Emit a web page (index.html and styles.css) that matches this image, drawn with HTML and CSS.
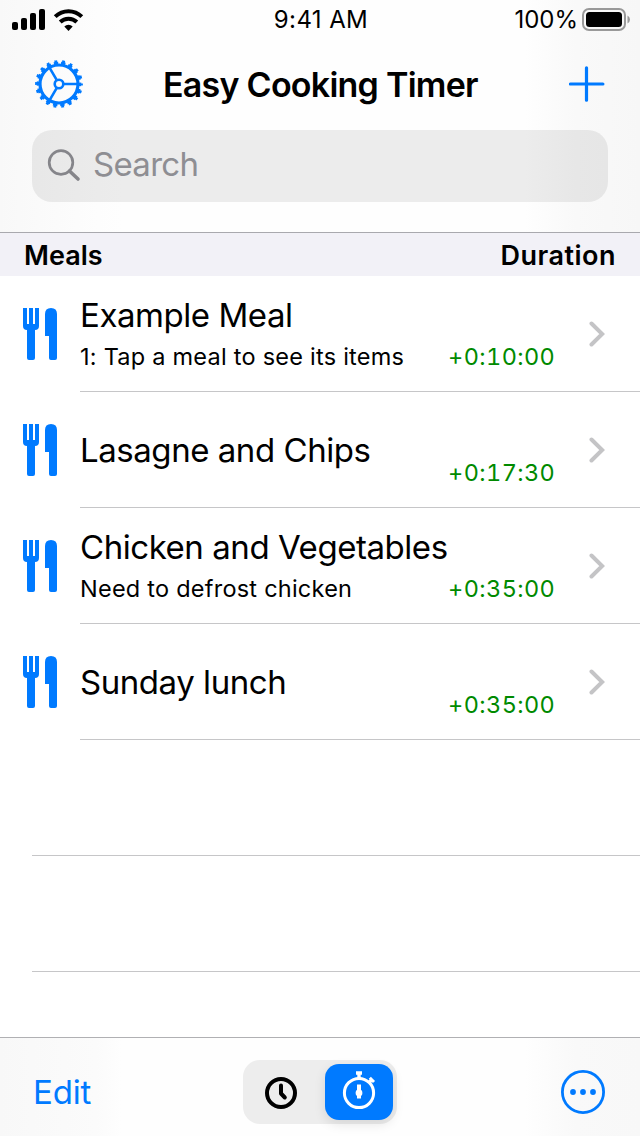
FILE: index.html
```html
<!DOCTYPE html>
<html lang="en">
<head>
	<meta charset="UTF-8">
	<title>Easy Cooking Timer</title>
	<link rel="stylesheet" href="styles.css">
</head>
<body>
<!-- shared icons -->
<svg class="defs" width="0" height="0">
	<symbol id="cutlery" viewBox="0 0 34 52">
		<path d="M0 0h4v16h2V0h4v16h2V0h4v18q0 4-4 4v28q0 2-2 2H6q-2 0-2-2V22q-4 0-4-4z"/>
		<path d="M22 28V6q0-6 6-6t6 6v44q0 2-2 2h-4q-2 0-2-2V28z"/>
	</symbol>
	<symbol id="chevron" viewBox="0 0 16 26">
		<path d="M2.5 2.5L13.2 13 2.5 23.5" fill="none" stroke="#c4c4c6" stroke-width="4" stroke-linecap="round"/>
	</symbol>
</svg>
<section class="container">
	<header class="top">
		<div class="status">
			<div class="signal">
				<svg width="72" height="22" viewBox="0 0 72 22">
					<rect x="0" y="13" width="6" height="8" rx="2"/>
					<rect x="9" y="9" width="6" height="12" rx="2"/>
					<rect x="18" y="4" width="6" height="17" rx="2"/>
					<rect x="27" y="0" width="6" height="21" rx="2"/>
					<g fill="none" stroke="#000" stroke-width="4">
						<path d="M43.2 7.6a19 19 0 0 1 26.6 0"/>
						<path d="M48.2 13a12 12 0 0 1 16.6 0"/>
					</g>
					<path d="M52.3 17.5a6.2 6.2 0 0 1 8.4 0L56.5 22z"/>
				</svg>
			</div>
			<span class="time">9:41 AM</span>
			<div class="battery">
				<span>100%</span>
				<svg width="48" height="24" viewBox="0 0 48 24">
					<rect x="1" y="1" width="42" height="21" rx="6" fill="none" stroke="#999" stroke-width="2"/>
					<rect x="4" y="4" width="36" height="15" rx="3.5"/>
					<path d="M45.5 7.5q2.500 1.500 2.500 4t-2.500 4z" fill="#999"/>
				</svg>
			</div>
		</div>
		<div class="nav">
			<svg class="gear" width="48" height="48" viewBox="-24 -24 48 48">
				<g fill="none" stroke="#007aff">
					<circle r="19" stroke-width="3.2"/>
					<circle r="21" stroke-width="2.6" stroke-dasharray="4.4 2.930" stroke-dashoffset="2.2"/>
					<circle r="22.500" stroke-width="2.800" stroke-dasharray="2.8 5.054" stroke-dashoffset="1.4"/>
					<circle r="4.300" stroke-width="2.600"/>
					<path d="M5 0h14M-2.500-4.330L-9.500-16.450M-2.500 4.330L-9.500 16.450" stroke-width="2.600"/>
				</g>
			</svg>
			<h1>Easy Cooking Timer</h1>
			<svg class="plus" width="36" height="36" viewBox="0 0 36 36">
				<path d="M1.500 18h32.400M17.500 1.800v32.400" stroke="#007aff" stroke-width="3.200" stroke-linecap="round"/>
			</svg>
		</div>
		<div class="search">
			<svg width="34" height="34" viewBox="0 0 34 34">
				<g fill="none" stroke="#85858a" stroke-linecap="round">
					<circle cx="14" cy="13.500" r="11.800" stroke-width="2.700"/>
					<path d="M22.500 22l8.500 8" stroke-width="3.600"/>
				</g>
			</svg>
			<span>Search</span>
		</div>
	</header>
	<div class="title">
		<span class="meals">Meals</span>
		<span class="duration">Duration</span>
	</div>
	<ul class="list">
		<li>
			<svg class="icon"><use href="#cutlery"/></svg>
			<div class="row">
				<div class="info">
					<h2>Example Meal</h2>
					<p>1: Tap a meal to see its items</p>
				</div>
				<span class="len">+0:10:00</span>
				<svg class="arrow"><use href="#chevron"/></svg>
			</div>
		</li>
		<li>
			<svg class="icon"><use href="#cutlery"/></svg>
			<div class="row">
				<div class="info">
					<h2>Lasagne and Chips</h2>
				</div>
				<span class="len">+0:17:30</span>
				<svg class="arrow"><use href="#chevron"/></svg>
			</div>
		</li>
		<li>
			<svg class="icon"><use href="#cutlery"/></svg>
			<div class="row">
				<div class="info">
					<h2>Chicken and Vegetables</h2>
					<p>Need to defrost chicken</p>
				</div>
				<span class="len">+0:35:00</span>
				<svg class="arrow"><use href="#chevron"/></svg>
			</div>
		</li>
		<li>
			<svg class="icon"><use href="#cutlery"/></svg>
			<div class="row">
				<div class="info">
					<h2>Sunday lunch</h2>
				</div>
				<span class="len">+0:35:00</span>
				<svg class="arrow"><use href="#chevron"/></svg>
			</div>
		</li>
		<li class="empty"></li>
		<li class="empty"></li>
	</ul>
	<footer class="bottom">
		<a href="javascript:;" class="edit">Edit</a>
		<div class="switch">
			<a href="javascript:;">
				<svg width="32" height="34" viewBox="0 0 32 34">
					<g fill="none" stroke="#000" stroke-width="4" stroke-linecap="round" stroke-linejoin="round">
						<circle cx="16" cy="18" r="14"/>
						<path d="M16 10.500v8l3.800 4"/>
					</g>
				</svg>
			</a>
			<a href="javascript:;" class="on">
				<svg width="34" height="42" viewBox="0 0 34 42">
					<g fill="none" stroke="#fff" stroke-width="3">
						<circle cx="17" cy="22" r="14.600"/>
						<path d="M14 2h6M17 2v6M26.500 12l3-3" stroke-width="3.400"/>
						<path d="M27.800 6.800l4.200 4.200"/>
						<path d="M17 13.500v14" stroke-width="4"/>
					</g>
					<circle cx="17" cy="22" r="3.400" fill="#fff"/>
				</svg>
			</a>
		</div>
		<svg class="more" width="44" height="44" viewBox="0 0 44 44">
			<circle cx="22" cy="22" r="20.600" fill="none" stroke="#007aff" stroke-width="2.800"/>
			<g fill="#007aff">
				<circle cx="12" cy="22" r="2.900"/>
				<circle cx="22" cy="22" r="2.900"/>
				<circle cx="32" cy="22" r="2.900"/>
			</g>
		</svg>
	</footer>
</section>
</body>
</html>
```
FILE: styles.css
```css
body, h1, h2, p, ul, li
{
	margin: 0;
	padding: 0;
}
body{
	background: #fff;
	color: #000;
	font-family: Inter, "Liberation Sans", sans-serif;
}
h1, h2 { font-weight: 400; }
ul { list-style: none; }
a { text-decoration: none; color: #007aff; }
svg { display: block; flex-shrink: 0; }
span, h1, h2, p, a { white-space: nowrap; }
.defs{
	position: absolute;
}

.container{
	width: 640px;
	height: 1136px;
	overflow: hidden;
	display: flex;
	flex-direction: column;
}
/* top bar */
.top{
	box-sizing: border-box;
	height: 233px;
	border-bottom: 1px solid #a9a9ae;
	background: linear-gradient(90deg, #f8f8f8, #fcfcfc 12%, #fefefe 19%, #fefefe 82%, #f9f9f9 90%, #f7f7f7);
}
.status{
	display: grid;
	grid-template-columns: 1fr auto 1fr;
	align-items: center;
	height: 40px;
	padding: 0 10px 0 12px;
	font-size: 24px;
}
.time{
	letter-spacing: 0.4px;
	line-height: 28px;
}
.battery{
	display: flex;
	justify-content: flex-end;
	align-items: center;
	gap: 4px;
}
.battery span{
	line-height: 28px;
}
.nav{
	display: flex;
	align-items: center;
	height: 88px;
	padding: 0 35px;
}
.nav h1{
	flex: 1;
	padding-left: 80px;
	font-size: 34px;
	font-weight: 600;
	letter-spacing: -0.75px;
}
.search{
	display: flex;
	align-items: center;
	box-sizing: border-box;
	height: 72px;
	margin: 2px 32px 0;
	padding-left: 15px;
	border-radius: 20px;
	background: rgba(0,0,0,.07);
	color: #8e8e93;
	font-size: 33px;
	gap: 12px;
}
.search span{
	padding-bottom: 4px;
	letter-spacing: -0.7px;
}

.title{
	display: flex;
	justify-content: space-between;
	align-items: center;
	box-sizing: border-box;
	height: 43px;
	padding: 2px 24px 0;
	background: #f2f1f7;
	font-size: 27px;
	font-weight: 600;
}
.duration{
	letter-spacing: 0.5px;
}
/* meals */
.list{
	flex: 1;
}
.list li{
	display: flex;
	height: 116px;
}
.icon{
	width: 34px;
	height: 52px;
	margin: 32px 23px 0;
	fill: #007aff;
}
.row{
	flex: 1;
	display: flex;
	box-sizing: border-box;
	border-bottom: 1px solid #c6c6c8;
	padding-right: 35px;
}
.info{
	width: 368px;
	display: flex;
	flex-direction: column;
	justify-content: center;
}
.info h2{
	font-size: 33px;
	line-height: 42px;
	letter-spacing: -0.45px;
}
.info p{
	font-size: 23.500px;
	line-height: 28px;
	margin: 7px 0 3px;
	letter-spacing: 0.24px;
}
.len{
	width: 108px;
	margin-top: 66px;
	color: #008a00;
	font-size: 23.500px;
	line-height: 30px;
	font-variant-numeric: tabular-nums;
	letter-spacing: 0.4px;
}
.arrow{
	width: 16px;
	height: 26px;
	margin: 45px 0 0 auto;
}
.list .empty{
	box-sizing: border-box;
	margin-left: 32px;
	border-bottom: 1px solid #c6c6c8;
}
/* toolbar */
.bottom{
	box-sizing: border-box;
	height: 99px;
	padding: 22px 35px 0 33px;
	border-top: 1px solid #b0b0b3;
	background: linear-gradient(90deg, #f8f8f8, #fbfbfb 15%, #fefefe 19%, #fefefe 82%, #f9f9f9 90%, #f8f8f8);
	display: grid;
	grid-template-columns: 210px 154px 1fr;
	align-items: start;
}
.edit{
	font-size: 33px;
	line-height: 64px;
	letter-spacing: -0.2px;
}
.switch{
	display: flex;
	box-sizing: border-box;
	height: 64px;
	padding: 4px;
	border-radius: 17px;
	background: #ededed;
}
.switch a{
	width: 68px;
	height: 56px;
	display: flex;
	justify-content: center;
	align-items: center;
	border-radius: 14px;
}
.switch .on{
	margin-left: auto;
	background: #007aff;
	box-shadow: 0 4px 12px rgba(0,0,0,.1);
}
.more{
	justify-self: end;
	margin-top: 10px;
}
```
